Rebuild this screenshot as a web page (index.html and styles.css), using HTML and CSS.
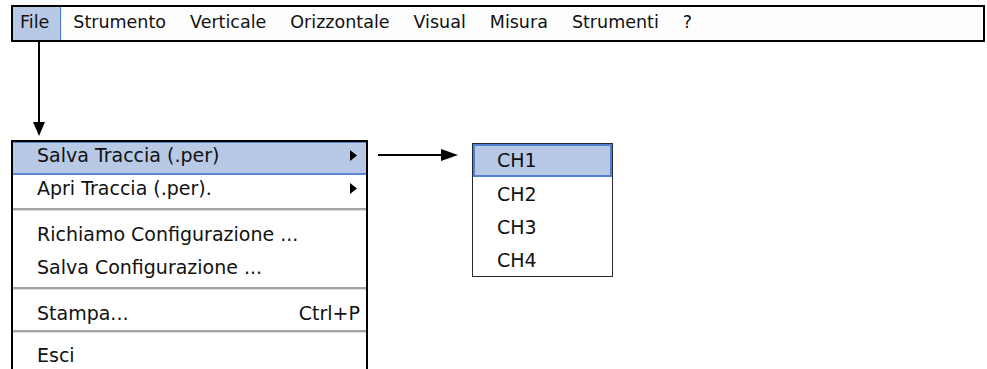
FILE: index.html
```html
<!DOCTYPE html>
<html lang="it">
<head>
    <meta charset="UTF-8">
    <meta name="viewport" content="width=device-width, initial-scale=1.0">
    <title>Menu File</title>
    <link rel="stylesheet" href="styles.css">
</head>
<body>
    <div class="screen">
        <div class="menubar">
            <span class="menu-item first active">File</span>
            <span class="menu-item">Strumento</span>
            <span class="menu-item">Verticale</span>
            <span class="menu-item">Orizzontale</span>
            <span class="menu-item">Visual</span>
            <span class="menu-item">Misura</span>
            <span class="menu-item">Strumenti</span>
            <span class="menu-item">?</span>
        </div>

        <svg class="down-arrow" width="40" height="98" viewBox="0 0 40 98">
            <line x1="28" y1="0" x2="28" y2="82" stroke="#000" stroke-width="2"/>
            <polygon points="22,80 34,80 28,94" fill="#000"/>
        </svg>

        <div class="menus">
            <div class="dropdown">
                <div class="row hl">
                    <span>Salva Traccia (.per)</span>
                    <svg class="tri" width="7" height="11" viewBox="0 0 7 11"><polygon points="0,0 7,5.5 0,11" fill="#000"/></svg>
                </div>
                <div class="row">
                    <span>Apri Traccia (.per).</span>
                    <svg class="tri" width="7" height="11" viewBox="0 0 7 11"><polygon points="0,0 7,5.5 0,11" fill="#000"/></svg>
                </div>
                <div class="sep"></div>
                <div class="row"><span>Richiamo Configurazione ...</span></div>
                <div class="row"><span>Salva Configurazione ...</span></div>
                <div class="sep"></div>
                <div class="row">
                    <span>Stampa...</span>
                    <span class="shortcut">Ctrl+P</span>
                </div>
                <div class="sep last"></div>
                <div class="row"><span>Esci</span></div>
            </div>

            <svg class="side-arrow" width="104" height="30" viewBox="0 0 104 30">
                <line x1="10" y1="15" x2="76" y2="15" stroke="#000" stroke-width="2"/>
                <polygon points="73,9 90,15 73,21" fill="#000"/>
            </svg>

            <div class="submenu">
                <div class="sub-row hl">CH1</div>
                <div class="sub-row">CH2</div>
                <div class="sub-row">CH3</div>
                <div class="sub-row">CH4</div>
            </div>
        </div>
    </div>
</body>
</html>
```

FILE: styles.css
```css
html, body {
    margin: 0;
    padding: 0;
    background: #fff;
    overflow: hidden;
}

body {
    font-family: "DejaVu Sans", sans-serif;
    color: #111;
}

.screen {
    padding: 5px 0 0 11px;
}

.menubar {
    display: flex;
    box-sizing: border-box;
    width: 974px;
    height: 37px;
    border: 2px solid #000;
    background: #fdfdfd;
    font-size: 17.5px;
}

.menu-item {
    padding: 0 12px 3px;
    line-height: 30px;
}

.menu-item.first {
    padding-left: 7px;
    padding-right: 11px;
}

.menu-item.active {
    background: #b8c9e5;
    border-right: 1px solid #3f74d0;
}

.down-arrow {
    display: block;
}

.menus {
    display: flex;
    align-items: flex-start;
}

.dropdown {
    box-sizing: border-box;
    width: 357px;
    height: 260px;
    border: 2px solid #000;
    border-bottom: none;
    background: #fff;
    font-size: 19px;
}

.row {
    display: flex;
    justify-content: space-between;
    align-items: flex-start;
    box-sizing: border-box;
    height: 33px;
    padding: 1px 6px 0 24px;
    line-height: 24px;
}

.row .tri {
    margin: 7px 3px 0 0;
}

.row.hl {
    background: #b8c9e5;
    border-top: 1px solid #5b87d3;
    border-bottom: 2px solid #5b87d3;
    padding-top: 0;
}

.sep {
    height: 2px;
    margin-bottom: 10px;
    background: #a3a3a3;
    border-bottom: 1px solid #dcdcdc;
}

.sep.last {
    margin-top: -3px;
    margin-bottom: 9px;
}

.side-arrow {
    display: block;
}

.submenu {
    box-sizing: border-box;
    width: 141px;
    margin-top: 3px;
    border: 1px solid #2a2a2a;
    background: #fff;
    font-size: 19px;
}

.sub-row {
    box-sizing: border-box;
    height: 33px;
    padding: 1px 0 0 24px;
    line-height: 32px;
}

.sub-row.hl {
    background: #b8c9e5;
    border: 2px solid #4f80d2;
    padding-left: 22px;
    padding-top: 0;
    line-height: 29px;
}
```
